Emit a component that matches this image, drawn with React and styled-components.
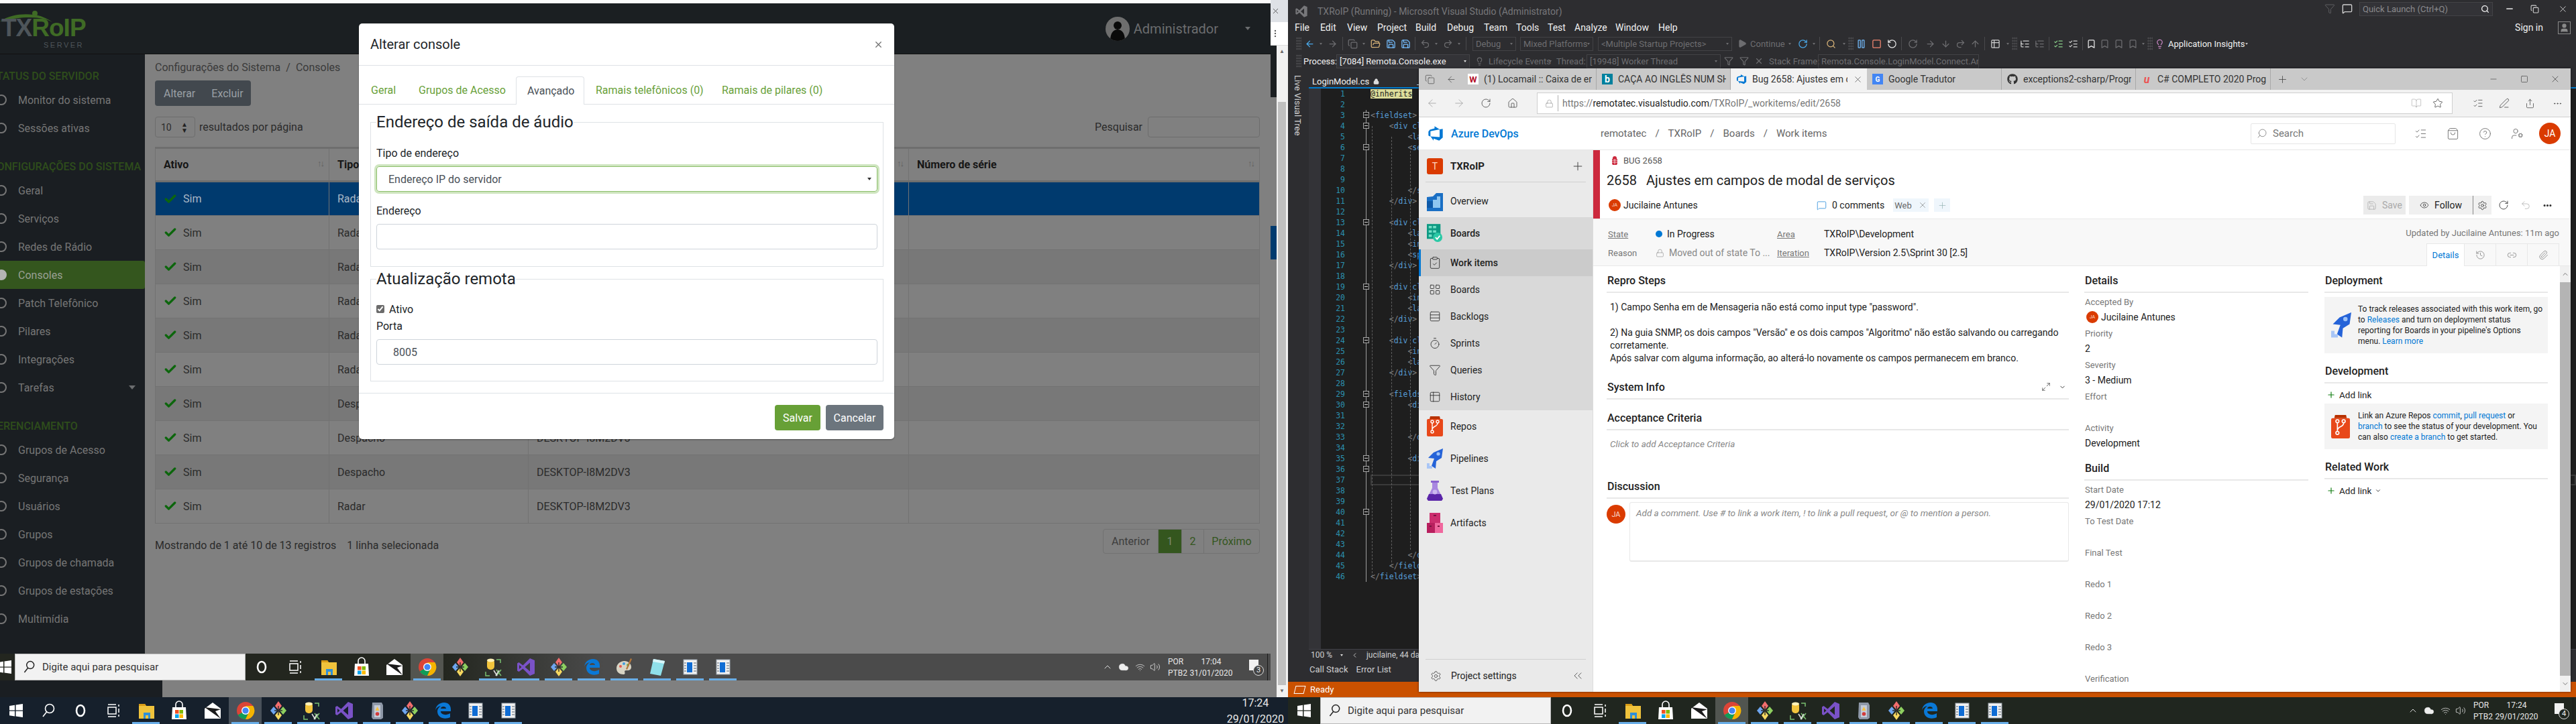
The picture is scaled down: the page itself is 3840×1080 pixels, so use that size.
import React from "react";
import styled, { createGlobalStyle } from "styled-components";
import {
  ArrowDown, ArrowLeft, ArrowRight, ArrowUp, Bookmark, BookOpen, Check, ChevronDown, ChevronLeft, ChevronUp,
  ChevronsLeft, CircleHelp, ClipboardCheck, Cloud, Copy, Ellipsis, EllipsisVertical, Eye, Funnel, History, House, LayoutGrid,
  Lightbulb, Link2, ListChecks, ListTree, Lock, Maximize2, MessageSquare, Minus, Paperclip, Pause, PenLine, Plus,
  Redo2, RotateCcw, RotateCw, Save, Search, Settings, Share, ShoppingBag, Square, Star, Undo2, UserCog, Volume2,
  Wifi, X, FolderOpen, Table2, Timer, Rows3, Play, User,
} from "lucide-react";
import { FaGithub } from "react-icons/fa";

const GlobalStyle = createGlobalStyle`
  html, body {
    margin: 0;
    background: #16202c;
    font-family: Roboto, "Open Sans", sans-serif;
  }
  * { box-sizing: border-box; }
`;

// ---------------------------------------------------------------- taskbar art

const TASK_ICONS = {
  win: <path d="M5 8l8-1.2v7.7H5zM14.5 6.6L25 5v9.5H14.5zM5 15.8h8v7.6L5 22.2zM14.5 15.8H25V25l-10.5-1.5z" fill="#fff" />,
  search: <g fill="none" stroke="#fff" strokeWidth="1.6"><circle cx="17" cy="12" r="6.5" /><path d="M12.5 17L7 24" /></g>,
  cortana: <ellipse cx="15" cy="15" rx="6" ry="8" fill="none" stroke="#fff" strokeWidth="2.6" />,
  task: <g fill="none" stroke="#fff" strokeWidth="1.5"><rect x="7" y="10" width="12" height="10" /><path d="M7 6h12M7 24h12M23 6v3M23 12v6M23 21v3" /></g>,
  explorer: <g><path d="M4 5h9l2 3h12v19H4z" fill="#f0c33c" /><path d="M4 5h9l2 3H4z" fill="#d99c17" /><path d="M11 27v-9h10v9h-3v-5h-4v5z" fill="#2f8fd8" /></g>,
  store: <g><path d="M5 10h20l1 18H4z" fill="#fff" /><path d="M10 10V6a5 5 0 0110 0v4" fill="none" stroke="#fff" strokeWidth="1.6" /><rect x="9" y="14" width="5.5" height="5.5" fill="#f25022" /><rect x="15.5" y="14" width="5.5" height="5.5" fill="#7fba00" /><rect x="9" y="20.5" width="5.5" height="5.5" fill="#00a4ef" /><rect x="15.5" y="20.5" width="5.5" height="5.5" fill="#ffb900" /></g>,
  mail: <g><path d="M3 12L15 3l12 9v15H3z" fill="#fff" /><path d="M3 10l24 3-8 3 8 11z" fill="#1b1b1b" /></g>,
  chrome: <g><circle cx="15" cy="15" r="13" fill="#db4437" /><path d="M15 15L3.7 21.5A13 13 0 0015 28l6-13z" fill="#0f9d58" /><path d="M15 8h11.3A13 13 0 0115 28l6.3-13z" fill="#f4b400" /><circle cx="15" cy="15" r="6" fill="#fff" /><circle cx="15" cy="15" r="4.6" fill="#4285f4" /></g>,
  diamond: <g><path d="M15 1l5 7-5 6-5-6z" fill="#f26d6d" /><path d="M8 9l5 6-5 6-5-6z" fill="#6ea6f0" /><path d="M22 9l5 6-5 6-5-6z" fill="#8ed060" /><path d="M15 16l5 6-5 7-5-7z" fill="#f6d860" /><path d="M15 8v14M9 15h12" stroke="#2e2e2e" strokeWidth="1.4" /></g>,
  db: <g><rect x="6" y="3" width="11" height="16" rx="5" fill="#f2c43d" /><ellipse cx="11.5" cy="5" rx="5.5" ry="2.4" fill="#fff2b8" /><path d="M20 4h6v5M4 22v6h6M20 28l7-9M27 28l-7-9" fill="none" stroke="#7ac070" strokeWidth="1.5" /><path d="M16 20l5 8M24 20l-5 8" stroke="#ddd" strokeWidth="1.6" /></g>,
  vs: <path d="M21 2L10.5 12.5 4.5 8 2 9.5v11L4.5 22l6-4.5L21 28l7-3V5zM21 8.5v13L13.5 15zM5 12l3.5 3L5 18z" fill="#7a52c7" />,
  palette: <g><path d="M15 6C8 6 3 11 3 17c0 6 5 9 10 9 3 0 3-2 2-4 0-2 2-2 4-2 4 0 6-2 6-5 0-5-5-9-10-9z" fill="#d8d4c4" /><circle cx="9" cy="14" r="2" fill="#e85a4f" /><circle cx="14" cy="10" r="2" fill="#3f9be0" /><circle cx="20" cy="12" r="2" fill="#63b455" /><path d="M24 2l-7 16 2 1 7-16z" fill="#b5763a" /></g>,
  note: <g><path d="M9 3l17 3-6 22-16-3z" fill="#8fe0ea" /><path d="M9 3l17 3-1 4-17-3z" fill="#d9f6fa" /></g>,
  secure: <g><path d="M8 3h14l2 4v19l-3 2H9l-2-3z" fill="#8e98a8" /><rect x="11" y="7" width="9" height="18" fill="#c5ccd8" /><path d="M15.5 9l3 6h-6z" fill="#f6c244" /><circle cx="15.5" cy="20" r="2.8" fill="#d23a3a" /></g>,
  doc: <g><rect x="5" y="4" width="20" height="22" fill="#f1f1f1" stroke="#9aa3ad" /><rect x="10" y="8" width="8" height="15" fill="#0f6cd4" /><path d="M6 9h3M6 13h3M6 17h3M6 21h3M20 9h4M20 13h4M20 17h4M20 21h4" stroke="#8a929c" strokeWidth="1.5" /></g>,
  edge: <path d="M4 16C4 8 10 3 17 3c6 0 10 4 10 10v3H12c0 5 8 7 14 3v6c-8 4-19 1-19-9 0-3 2-6 5-8-5 1-8 4-8 8zm8-4h8c0-4-8-4-8 0z" fill="#0a78d6" />,
};

const LEFT_BOTTOM = [
  ["win", 47], ["search", 49], ["cortana", 48], ["task", 49], ["explorer", 49, 1], ["store", 50], ["mail", 49],
  ["chrome", 49, 1, 1], ["diamond", 49, 1], ["db", 49, 1], ["vs", 49, 1], ["secure", 49, 1], ["diamond", 49, 1],
  ["edge", 49, 1], ["doc", 49, 1], ["doc", 49, 1],
];
const INNER_BAR = [
  ["cortana", 48], ["task", 51], ["explorer", 49, 1], ["store", 49], ["mail", 49], ["chrome", 49, 1, 1],
  ["diamond", 49], ["db", 49, 1], ["vs", 49, 1], ["diamond", 49, 1], ["edge", 49, 1], ["palette", 49, 1],
  ["note", 49, 1], ["doc", 49, 1], ["doc", 49, 1],
];
const RIGHT_BAR = [
  ["cortana", 48], ["task", 49], ["explorer", 49, 1], ["store", 50], ["mail", 49], ["chrome", 49, 1, 1],
  ["diamond", 49, 1], ["db", 49, 1], ["vs", 49, 1], ["secure", 49, 1], ["diamond", 49, 1], ["edge", 49, 1],
  ["doc", 49, 1], ["doc", 49, 1],
];

const Bar = styled.div`
  display: flex;
  align-items: stretch;
  height: 40px;
  flex: none;
  background: ${(p) => p.$bg};
  color: #e8e8e8;
`;

const Slot = styled.div`
  position: relative;
  width: ${(p) => p.$w}px;
  flex: none;
  display: flex;
  align-items: center;
  justify-content: center;
  background: ${(p) => (p.$active ? "rgba(255,255,255,.22)" : "transparent")};
  &::after {
    content: "";
    display: ${(p) => (p.$on ? "block" : "none")};
    position: absolute;
    left: 4px;
    right: 4px;
    bottom: 0;
    height: 3px;
    background: #69aee8;
  }
`;

const SearchBox = styled.div`
  width: ${(p) => p.$w}px;
  flex: none;
  background: #f2f2f2;
  border: 1px solid #b8b8b8;
  display: flex;
  align-items: center;
  gap: 9px;
  padding-left: 9px;
  font-size: 15px;
  color: #333;
`;

const Tray = styled.div`
  margin-left: auto;
  display: grid;
  grid-template-columns: 24px 24px 25px 20px 44px 59px 54px 5px;
  align-items: center;
  justify-items: center;
  font-size: 12px;
`;

const LangCol = styled.div`
  display: flex;
  flex-direction: column;
  gap: 3px;
  justify-self: start;
  padding-left: 9px;
`;

const ClockCol = styled.div`
  display: flex;
  flex-direction: column;
  align-items: center;
  gap: 3px;
  white-space: nowrap;
  text-align: center;
`;

const LoneClock = styled(ClockCol)`
  margin-left: auto;
  margin-right: 6px;
  justify-content: center;
  gap: 5px;
`;

const Notif = styled.div`
  position: relative;
  width: 14px;
  height: 16px;
  background: #f1f1f1;
  margin-top: -6px;
  margin-left: 14px;
`;

const NotifCount = styled.span`
  position: absolute;
  left: 6px;
  top: 8px;
  width: 16px;
  height: 16px;
  border: 1px solid #ddd;
  border-radius: 50%;
  background: ${(p) => p.$bg};
  color: #f1f1f1;
  font-size: 11px;
  line-height: 14px;
  text-align: center;
`;

const TrayEnd = styled.div`
  width: 1px;
  height: 40px;
  background: #1c1c1c;
  justify-self: start;
`;

function Slots({ items }) {
  return items.map(([name, w, on, active], i) => (
    <Slot key={i} $w={w} $on={on} $active={active}>
      <svg width="30" height="30" viewBox="0 0 30 30">{TASK_ICONS[name]}</svg>
    </Slot>
  ));
}

function SystemTray({ time, date, count, bg }) {
  return (
    <Tray>
      <ChevronUp size={16} strokeWidth={1.4} />
      <Cloud size={16} fill="#eee" strokeWidth={1} />
      <Wifi size={15} strokeWidth={1.2} />
      <Volume2 size={16} strokeWidth={1.2} />
      <LangCol><span>POR</span><span>PTB2</span></LangCol>
      <ClockCol><span>{time}</span><span>{date}</span></ClockCol>
      <Notif><NotifCount $bg={bg}>{count}</NotifCount></Notif>
      <TrayEnd />
    </Tray>
  );
}

const WinSearch = () => (
  <svg width="22" height="22" viewBox="0 0 30 30"><g fill="none" stroke="#222" strokeWidth="2"><circle cx="18" cy="11" r="7.5" /><path d="M13 17l-7 9" /></g></svg>
);

// ---------------------------------------------------------------- left screen

const Desktop = styled.div`
  display: flex;
  width: 3840px;
  height: 1080px;
  overflow: hidden;
`;

const LeftScreen = styled.div`
  position: relative;
  width: 1920px;
  flex: none;
  display: flex;
  flex-direction: column;
`;

const LeftTop = styled.div`
  display: flex;
  height: 1040px;
`;

const PageColumn = styled.div`
  width: 1894px;
  flex: none;
  display: flex;
  flex-direction: column;
`;

const TopStrip = styled.div`
  height: 5px;
  flex: none;
  background: #fbfbfb;
`;

const AppNav = styled.div`
  height: 76px;
  flex: none;
  display: flex;
  align-items: center;
  background: #1b1f22;
  border-bottom: 1px solid #111;
`;

const Logo = styled.div`
  position: relative;
  width: 120px;
  height: 60px;
  font-family: "Liberation Sans", sans-serif;
`;

const LogoArc = styled.svg`
  position: absolute;
  left: 0;
  top: 2px;
`;

const LogoWord = styled.div`
  position: absolute;
  left: 2px;
  top: 8px;
  font-size: 37px;
  font-weight: 700;
  letter-spacing: -1px;
  color: #3f6b25;
  white-space: nowrap;
`;

const LogoTx = styled.span`
  color: #4e555a;
`;

const LogoSub = styled.div`
  position: absolute;
  left: 65px;
  top: 48px;
  font-size: 11px;
  letter-spacing: 2.5px;
  color: #4e555a;
`;

const UserMenu = styled.div`
  margin-left: auto;
  margin-right: 30px;
  display: flex;
  align-items: center;
  gap: 6px;
  font-size: 20px;
  color: #6b6d6f;
`;

const UserPic = styled.div`
  width: 36px;
  height: 36px;
  border-radius: 50%;
  background: #6e6e6e;
  display: flex;
  align-items: flex-end;
  justify-content: center;
  overflow: hidden;
`;

const Caret = styled.span`
  width: 0;
  height: 0;
  border-left: ${(p) => p.$s || 5}px solid transparent;
  border-right: ${(p) => p.$s || 5}px solid transparent;
  border-top: ${(p) => (p.$s || 5) + 1}px solid ${(p) => p.$c || "#6b6d6f"};
  margin-left: ${(p) => p.$ml || 0}px;
`;

const AppBody = styled.div`
  flex: 1;
  display: flex;
  min-height: 0;
`;

const SideNav = styled.div`
  width: 216px;
  flex: none;
  background: #1a1e22;
  overflow: hidden;
  padding-top: 12px;
`;

const SideHeader = styled.div`
  height: ${(p) => (p.$first ? 35 : 51)}px;
  display: flex;
  align-items: flex-end;
  padding-bottom: 5px;
  margin-left: -15px;
  font-size: 16px;
  font-weight: 500;
  white-space: nowrap;
  color: #2e4d1b;
`;

const SideItem = styled.div`
  height: 42px;
  display: flex;
  align-items: center;
  gap: 17px;
  margin-left: -6px;
  padding-right: 16px;
  border-radius: 0 3px 3px 0;
  font-size: 16px;
  color: ${(p) => (p.$active ? "#9aa094" : "#767676")};
  background: ${(p) => (p.$active ? "#34561e" : "transparent")};
`;

const SideDot = styled.span`
  width: 16px;
  height: 16px;
  flex: none;
  border-radius: 50%;
  border: 2px solid ${(p) => (p.$active ? "#b4b4b4" : "#767676")};
  background: ${(p) => (p.$active ? "#b4b4b4" : "transparent")};
`;

const SideCaret = styled(Caret)`
  margin-left: auto;
  margin-right: -2px;
`;

const Content = styled.div`
  flex: 1;
  min-width: 0;
  background: #808080;
  padding: 0 16px 0 15px;
  color: #2b2b2b;
  font-size: 16px;
`;

const Crumb = styled.div`
  height: 39px;
  display: flex;
  align-items: center;
  gap: 8px;
  color: #3a3a3a;
`;

const ActionGroup = styled.div`
  width: 143px;
  height: 38px;
  display: flex;
  align-items: center;
  gap: 24px;
  padding-left: 13px;
  background: #42484e;
  border-radius: 4px;
  color: #9aa0a5;
`;

const Controls = styled.div`
  margin-top: 16px;
  height: 31px;
  display: flex;
  align-items: center;
`;

const PageSize = styled.div`
  width: 60px;
  height: 31px;
  display: flex;
  align-items: center;
  justify-content: space-between;
  padding: 0 10px 0 8px;
  margin-right: 6px;
  border: 1px solid #6d6d6d;
  border-radius: 4px;
  font-size: 14px;
`;

const SortCaret = styled.span`
  font-size: 10px;
  line-height: 9px;
  color: #222;
  text-align: center;
`;

const SearchLabel = styled.span`
  margin-left: auto;
  margin-right: 8px;
`;

const SearchField = styled.div`
  width: 167px;
  height: 31px;
  border: 1px solid #6d6d6d;
  border-radius: 4px;
`;

const Table = styled.table`
  margin-top: 14px;
  width: 1646px;
  table-layout: fixed;
  border-collapse: collapse;
  border: 1px solid #727272;
  border-top: 3px solid #6e6e6e;
`;

const HeadCell = styled.th`
  position: relative;
  width: ${(p) => p.$w}px;
  height: 50px;
  padding: 0 12px;
  text-align: left;
  font-size: 16px;
  font-weight: 700;
  color: #161616;
  border: 1px solid #727272;
  border-bottom: 3px solid #6e6e6e;
`;

const SortArrows = styled.span`
  position: absolute;
  right: 8px;
  top: 14px;
  font-size: 13px;
  font-weight: 400;
  letter-spacing: -2px;
  color: #5e5e5e;
`;

const Row = styled.tr`
  height: 51px;
  background: ${(p) => (p.$sel ? "#003a6e" : p.$odd ? "#787878" : "#808080")};
  color: ${(p) => (p.$sel ? "#aab8c6" : "#2b2b2b")};
`;

const Cell = styled.td`
  padding: 0 12px;
  border: 1px solid #727272;
`;

const CheckRow = styled.span`
  display: flex;
  align-items: center;
  gap: 9px;
`;

const FootRow = styled.div`
  margin-top: 8px;
  display: flex;
  align-items: flex-start;
`;

const Info = styled.div`
  padding-top: 15px;
  display: flex;
  gap: 16px;
`;

const Pager = styled.div`
  margin-left: auto;
  display: flex;
  height: 37px;
  border: 1px solid #727272;
  border-radius: 4px;
`;

const PagerCell = styled.div`
  width: ${(p) => p.$w}px;
  display: flex;
  align-items: center;
  justify-content: center;
  background: ${(p) => (p.$active ? "#34561e" : "transparent")};
  color: ${(p) => (p.$active ? "#7d8a72" : p.$dim ? "#3d3d3d" : "#34561e")};
  border-left: ${(p) => (p.$first ? "none" : "1px solid #727272")};
`;

const GapRow = styled.div`
  height: 25px;
  flex: none;
  background: #808080;
`;

const GapDark = styled.div`
  width: 242px;
  height: 100%;
  background: #1a1e22;
`;

// behind-window sliver on the right of the left screen
const PeekColumn = styled.div`
  width: 26px;
  flex: none;
  display: flex;
  flex-direction: column;
`;

const PeekTab = styled.div`
  height: 33px;
  padding-left: 1px;
  display: flex;
  align-items: center;
  background: #dee1e6;
  color: #444;
`;

const PeekBar = styled.div`
  height: 35px;
  flex: none;
  display: flex;
  align-items: center;
  background: #fff;
  border-bottom: 1px solid #ddd;
  color: #555;
`;

const PeekBody = styled.div`
  flex: 1;
  display: flex;
`;

const PeekPage = styled.div`
  width: 9px;
  background: linear-gradient(#1b1f22 0 77px, #808080 77px 269px, #003a6e 269px 319px, #808080 319px);
`;

const PeekScroll = styled.div`
  flex: 1;
  background: #c0c0c0;
  border-left: 2px solid #f1f1f1;
  border-right: 3px solid #f1f1f1;
  display: flex;
  flex-direction: column;
  align-items: center;
  justify-content: space-between;
  color: #666;
  font-size: 8px;
`;

const ScrollTop = styled.div`
  width: 100%;
  height: 84px;
  background: #f1f1f1;
  text-align: center;
  padding-top: 4px;
`;

const ScrollEnd = styled.div`
  width: 100%;
  height: 18px;
  background: #f1f1f1;
  text-align: center;
  padding-top: 4px;
`;

// ---------------------------------------------------------------- modal

const Modal = styled.div`
  position: absolute;
  left: 535px;
  top: 35px;
  width: 798px;
  height: 620px;
  background: #fff;
  border-radius: 5px;
  color: #212529;
  font-size: 16px;
  box-shadow: 0 1px 2px rgba(0, 0, 0, .4);
`;

const ModalHead = styled.div`
  height: 63px;
  display: flex;
  align-items: center;
  justify-content: space-between;
  padding: 0 16px 0 17px;
  border-bottom: 1px solid #dee2e6;
  font-size: 20px;
  color: #212529;
`;

const CloseX = styled.span`
  color: #6f6f6f;
  display: flex;
`;

const TabRow = styled.div`
  margin-top: 16px;
  height: 42px;
  display: flex;
  border-bottom: 1px solid #dee2e6;
`;

const ModalTab = styled.div`
  width: ${(p) => p.$w}px;
  height: ${(p) => (p.$active ? 42 : 41)}px;
  padding-left: ${(p) => p.$pl}px;
  display: flex;
  align-items: center;
  white-space: nowrap;
  color: ${(p) => (p.$active ? "#495057" : "#69a13a")};
  background: #fff;
  border: ${(p) => (p.$active ? "1px solid #dee2e6" : "none")};
  border-bottom: none;
  border-radius: 4px 4px 0 0;
`;

const ModalBody = styled.div`
  padding: 0 16px 0 17px;
`;

const Group = styled.fieldset`
  margin: ${(p) => p.$mt}px 0 0;
  padding: 0 8px ${(p) => p.$pb}px;
  border: 1px solid #dee2e6;
  min-width: 0;
`;

const GroupTitle = styled.legend`
  padding: 0;
  font-size: 24px;
  line-height: 29px;
  color: #212529;
`;

const FieldLabel = styled.div`
  height: 20px;
  line-height: 20px;
  margin-top: ${(p) => p.$mt}px;
`;

const BoxInput = styled.input`
  display: block;
  width: 100%;
  height: 38px;
  margin-top: 9px;
  padding: 0 24px;
  border: 1px solid #ced4da;
  border-radius: 4px;
  font: inherit;
  color: #495057;
  outline: none;
`;

const Picker = styled.div`
  height: 38px;
  margin-top: 9px;
  display: flex;
  align-items: center;
  justify-content: space-between;
  padding: 0 8px 0 17px;
  border: 1px solid #8dc06b;
  border-radius: 4px;
  box-shadow: 0 0 0 3px #cfe5c0;
  color: #495057;
`;

const CheckLine = styled.label`
  height: 20px;
  margin-top: 20px;
  display: flex;
  align-items: center;
  gap: 7px;
`;

const TickBox = styled.input`
  width: 12px;
  height: 12px;
  margin: 0;
  accent-color: #6b6b6b;
`;

const ModalFoot = styled.div`
  margin-top: 17px;
  padding: 17px 16px 0 0;
  display: flex;
  justify-content: flex-end;
  gap: 8px;
  border-top: 1px solid #dee2e6;
`;

const ModalButton = styled.div`
  width: ${(p) => p.$w}px;
  height: 38px;
  display: flex;
  align-items: center;
  justify-content: center;
  border-radius: 4px;
  color: #fff;
  background: ${(p) => p.$bg};
`;

const CONSOLE_ROWS = [
  ["Radar"], ["Radar"], ["Radar"], ["Radar"], ["Radar"], ["Radar"], ["Despacho"],
  ["Despacho", "DESKTOP-I8M2DV3"], ["Despacho", "DESKTOP-I8M2DV3"], ["Radar", "DESKTOP-I8M2DV3"],
];
const SIDE_A = ["Monitor do sistema", "Sessões ativas"];
const SIDE_B = ["Geral", "Serviços", "Redes de Rádio", "Consoles", "Patch Telefônico", "Pilares", "Integrações", "Tarefas"];
const SIDE_C = ["Grupos de Acesso", "Segurança", "Usuários", "Grupos", "Grupos de chamada", "Grupos de estações", "Multimídia"];

function SideEntries({ items }) {
  return items.map((t) => (
    <SideItem key={t} $active={t === "Consoles"}>
      <SideDot $active={t === "Consoles"} />
      {t}
      {t === "Tarefas" && <SideCaret $s={5} />}
    </SideItem>
  ));
}

function ConsoleModal() {
  return (
    <Modal>
      <ModalHead>
        Alterar console
        <CloseX><X size={15} strokeWidth={2} /></CloseX>
      </ModalHead>
      <TabRow>
        <ModalTab $w={71} $pl={18}>Geral</ModalTab>
        <ModalTab $w={163} $pl={18}>Grupos de Acesso</ModalTab>
        <ModalTab $w={102} $pl={16} $active>Avançado</ModalTab>
        <ModalTab $w={187} $pl={17}>Ramais telefônicos (0)</ModalTab>
        <ModalTab $w={200} $pl={18}>Ramais de pilares (0)</ModalTab>
      </TabRow>
      <ModalBody>
        <Group $mt={12} $pb={25}>
          <GroupTitle>Endereço de saída de áudio</GroupTitle>
          <FieldLabel $mt={22}>Tipo de endereço</FieldLabel>
          <Picker>Endereço IP do servidor<Caret $s={3} $c="#333" /></Picker>
          <FieldLabel $mt={19}>Endereço</FieldLabel>
          <BoxInput readOnly value="" />
        </Group>
        <Group $mt={4} $pb={24}>
          <GroupTitle>Atualização remota</GroupTitle>
          <CheckLine><TickBox type="checkbox" checked readOnly />Ativo</CheckLine>
          <FieldLabel $mt={6}>Porta</FieldLabel>
          <BoxInput readOnly value="8005" />
        </Group>
      </ModalBody>
      <ModalFoot>
        <ModalButton $w={68} $bg="#67a036">Salvar</ModalButton>
        <ModalButton $w={86} $bg="#6c757d">Cancelar</ModalButton>
      </ModalFoot>
    </Modal>
  );
}

function LeftMonitor() {
  return (
    <LeftScreen>
      <LeftTop>
        <PageColumn>
          <TopStrip />
          <AppNav>
            <Logo>
              <LogoArc width="90" height="20" viewBox="0 0 90 20">
                <path d="M0 17C14 7 34 5 50 7c10 1 20 5 28 11C66 11 40 7 0 17z" fill="#3f6b25" />
                <circle cx="52" cy="5" r="4" fill="#3f6b25" />
              </LogoArc>
              <LogoWord><LogoTx>TX</LogoTx>RoIP</LogoWord>
              <LogoSub>SERVER</LogoSub>
            </Logo>
            <UserMenu>
              <UserPic>
                <svg width="26" height="32" viewBox="0 0 26 32"><circle cx="13" cy="9" r="6" fill="#0a0a0a" /><path d="M2 32c0-12 5-17 11-17s11 5 11 17z" fill="#0a0a0a" /></svg>
              </UserPic>
              Administrador
              <Caret $s={4} $ml={34} />
            </UserMenu>
          </AppNav>
          <AppBody>
            <SideNav>
              <SideHeader $first>STATUS DO SERVIDOR</SideHeader>
              <SideEntries items={SIDE_A} />
              <SideHeader>CONFIGURAÇÕES DO SISTEMA</SideHeader>
              <SideEntries items={SIDE_B} />
              <SideHeader>GERENCIAMENTO</SideHeader>
              <SideEntries items={SIDE_C} />
            </SideNav>
            <Content>
              <Crumb>Configurações do Sistema<span>/</span>Consoles</Crumb>
              <ActionGroup><span>Alterar</span><span>Excluir</span></ActionGroup>
              <Controls>
                <PageSize>10<SortCaret>▲<br />▼</SortCaret></PageSize>
                resultados por página
                <SearchLabel>Pesquisar</SearchLabel>
                <SearchField />
              </Controls>
              <Table>
                <thead>
                  <tr>
                    <HeadCell $w={259}>Ativo<SortArrows>↑↓</SortArrows></HeadCell>
                    <HeadCell $w={297}>Tipo<SortArrows>↑↓</SortArrows></HeadCell>
                    <HeadCell $w={567}><SortArrows>↑↓</SortArrows></HeadCell>
                    <HeadCell $w={523}>Número de série<SortArrows>↑↓</SortArrows></HeadCell>
                  </tr>
                </thead>
                <tbody>
                  {CONSOLE_ROWS.map(([tipo, host], i) => (
                    <Row key={i} $sel={i === 0} $odd={i % 2 === 0}>
                      <Cell><CheckRow><Check size={20} strokeWidth={4} color="#0c660c" />Sim</CheckRow></Cell>
                      <Cell>{tipo}</Cell>
                      <Cell>{host}</Cell>
                      <Cell />
                    </Row>
                  ))}
                </tbody>
              </Table>
              <FootRow>
                <Info><span>Mostrando de 1 até 10 de 13 registros</span><span>1 linha selecionada</span></Info>
                <Pager>
                  <PagerCell $w={81} $first $dim>Anterior</PagerCell>
                  <PagerCell $w={35} $active>1</PagerCell>
                  <PagerCell $w={33}>2</PagerCell>
                  <PagerCell $w={83}>Próximo</PagerCell>
                </Pager>
              </FootRow>
            </Content>
          </AppBody>
          <Bar $bg="linear-gradient(90deg, #23261f 0 660px, #4b4b4b 900px)">
            <Slot $w={22}><svg width="22" height="30" viewBox="8 0 22 30">{TASK_ICONS.win}</svg></Slot>
            <SearchBox $w={344}><WinSearch />Digite aqui para pesquisar</SearchBox>
            <Slots items={INNER_BAR} />
            <SystemTray time="17:04" date="31/01/2020" count="3" bg="#444" />
          </Bar>
          <GapRow><GapDark /></GapRow>
        </PageColumn>
        <PeekColumn>
          <PeekTab><X size={13} strokeWidth={1.5} /></PeekTab>
          <PeekBar><EllipsisVertical size={14} /></PeekBar>
          <PeekBody>
            <PeekPage />
            <PeekScroll><ScrollTop>▲</ScrollTop><ScrollEnd>▼</ScrollEnd></PeekScroll>
          </PeekBody>
        </PeekColumn>
      </LeftTop>
      <Bar $bg="#16202c">
        <Slots items={LEFT_BOTTOM} />
        <LoneClock><span>17:24</span><span>29/01/2020</span></LoneClock>
      </Bar>
      <ConsoleModal />
    </LeftScreen>
  );
}

// ---------------------------------------------------------------- visual studio

const RightScreen = styled.div`
  position: relative;
  width: 1920px;
  flex: none;
  display: flex;
  flex-direction: column;
`;

const StudioWindow = styled.div`
  height: 1040px;
  display: flex;
  flex-direction: column;
  background: #2d2d30;
  color: #f1f1f1;
  font-size: 13px;
`;

const StudioTitle = styled.div`
  height: 30px;
  flex: none;
  display: flex;
  align-items: center;
  padding: 4px 0 0 10px;
  color: #77777a;
  font-size: 14px;
`;

const TitleText = styled.span`
  margin-left: 14px;
`;

const TitleRight = styled.div`
  margin-left: auto;
  display: flex;
  align-items: center;
  gap: 10px;
  margin-top: -8px;
  padding-right: 8px;
  color: #d0d0d0;
`;

const QuickLaunch = styled.div`
  width: 199px;
  height: 21px;
  display: flex;
  align-items: center;
  justify-content: space-between;
  padding: 0 4px;
  margin-right: 8px;
  border: 1px solid #434346;
  background: #333337;
  color: #8a8a8d;
  font-size: 13px;
`;

const MenuRow = styled.div`
  height: 22px;
  flex: none;
  display: flex;
  align-items: center;
  padding-left: 10px;
  font-size: 14px;
`;

const MenuLabel = styled.span`
  width: ${(p) => p.$w}px;
  flex: none;
`;

const SignIn = styled.div`
  margin-left: auto;
  display: flex;
  align-items: center;
  gap: 22px;
  padding-right: 8px;
`;

const UserBox = styled.div`
  width: 19px;
  height: 19px;
  border: 1px solid #8a8a8a;
  display: flex;
  align-items: center;
  justify-content: center;
  color: #8a8a8a;
`;

const ToolStrip = styled.div`
  height: 26px;
  flex: none;
  display: flex;
  align-items: center;
  padding-left: 12px;
  color: #6d6d70;
  white-space: nowrap;
`;

const Tool = styled.span`
  width: ${(p) => p.$w}px;
  flex: none;
  display: flex;
  align-items: center;
  justify-content: center;
  margin-left: ${(p) => p.$ml || 0}px;
`;

const ToolText = styled.span`
  width: ${(p) => p.$w}px;
  flex: none;
  color: ${(p) => (p.$on ? "#f1f1f1" : "#6d6d70")};
  margin-left: ${(p) => p.$ml || 0}px;
`;

const Grip = styled.span`
  width: 8px;
  height: 20px;
  flex: none;
  background: radial-gradient(#4a4a4d 1px, transparent 1.2px) 0 0 / 3px 4px;
`;

const ToolSep = styled.span`
  width: ${(p) => p.$w || 6}px;
  height: 20px;
  flex: none;
  background: linear-gradient(#4a4a4d, #4a4a4d) center / 1px 100% no-repeat;
`;

const Combo = styled.div`
  width: ${(p) => p.$w}px;
  height: 21px;
  flex: none;
  margin-left: ${(p) => p.$ml || 0}px;
  display: flex;
  align-items: center;
  justify-content: space-between;
  padding: 0 4px;
  overflow: hidden;
  border: 1px solid #434346;
  background: ${(p) => (p.$on ? "#333337" : "transparent")};
  color: ${(p) => (p.$on ? "#f1f1f1" : "#6d6d70")};
`;

const MiniCaret = styled(Caret).attrs((p) => ({ $s: 2, $c: p.$c || "#6d6d70" }))``;

const DocArea = styled.div`
  flex: 1;
  min-height: 0;
  display: flex;
`;

const Rail = styled.div`
  width: 31px;
  flex: none;
  padding: 8px 0 0 7px;
`;

const RailText = styled.div`
  writing-mode: vertical-rl;
  font-size: 13px;
  color: #d0d0d0;
`;

const EditorColumn = styled.div`
  flex: 1;
  min-width: 0;
  display: flex;
  flex-direction: column;
`;

const DocTabs = styled.div`
  height: 28px;
  flex: none;
  display: flex;
  align-items: center;
  gap: 6px;
  padding: 8px 0 0 5px;
  border-bottom: 2px solid #007acc;
`;

const DocTabExtra = styled.span`
  margin-left: 50px;
`;

const CodePane = styled.div`
  position: relative;
  flex: 1;
  min-height: 0;
  overflow: hidden;
  background: #1e1e1e;
  border-left: 18px solid #333337;
  font-family: "DejaVu Sans Mono", monospace;
  font-size: 11.5px;
`;

const CodeLine = styled.div`
  display: grid;
  grid-template-columns: 36px 25px 13px 1fr;
  height: 16px;
  line-height: 16px;
  white-space: pre;
`;

const LineNo = styled.span`
  text-align: right;
  color: #2b91af;
`;

const FoldCell = styled.span`
  grid-column: 3;
  position: relative;
  border-left: ${(p) => (p.$rail ? "1px solid #a0a0a0" : "none")};
  margin-left: 6px;
`;

const FoldBox = styled.span`
  position: absolute;
  left: -5px;
  top: 3px;
  width: 9px;
  height: 9px;
  background: #1e1e1e;
  border: 1px solid #a5a5a5;
  &::after {
    content: "";
    position: absolute;
    left: 1px;
    top: 3px;
    width: 5px;
    height: 1px;
    background: #d0d0d0;
  }
`;

const CodeText = styled.span`
  grid-column: 4;
  color: #808080;
  outline: ${(p) => (p.$current ? "2px solid #3a3a3a" : "none")};
  outline-offset: -2px;
`;

const TagName = styled.span`
  color: #569cd6;
`;

const Directive = styled.span`
  background: #dcdc9a;
  color: #1e1e1e;
`;

const Guide = styled.span`
  position: absolute;
  left: ${(p) => p.$x}px;
  top: ${(p) => p.$top}px;
  height: ${(p) => p.$h}px;
  border-left: 1px dashed #5f5f5f;
`;

const ZoomBar = styled.div`
  height: 17px;
  flex: none;
  display: flex;
  align-items: center;
  gap: 12px;
  padding-left: 3px;
  background: #2d2d30;
  border-top: 1px solid #3f3f46;
  font-size: 12px;
  color: #d0d0d0;
`;

const PanelTabs = styled.div`
  height: 32px;
  flex: none;
  display: flex;
  gap: 12px;
  padding: 6px 0 0 1px;
  color: #d0d0d0;
`;

const StatusBar = styled.div`
  height: 23px;
  flex: none;
  display: flex;
  align-items: center;
  gap: 8px;
  padding-left: 10px;
  background: #ca5100;
  color: #fff;
`;

const SourceBox = styled.span`
  width: 15px;
  height: 12px;
  border: 1.5px solid #fff;
  transform: skewX(-14deg);
`;

const CODE = {
  3: "<fieldset>", 4: '    <div class="form-group">', 5: "        <label>", 6: "        <select>", 10: "        </select>",
  11: "    </div>", 13: '    <div class="form-group">', 14: "        <label>", 15: "        <input>", 16: "        <span>",
  17: "    </div>", 19: '    <div class="form-group">', 20: "        <input>", 21: "        <label>", 22: "    </div>",
  24: '    <div class="form-group">', 25: "        <input>", 26: "        <label>", 27: "    </div>", 29: "    <fieldset>",
  30: '        <div class="form-group">', 33: "        </div>", 35: '        <div class="form-group">', 44: "        </div>",
  45: "    </fieldset>", 46: "</fieldset>",
};
const FOLDS = [3, 4, 6, 13, 19, 24, 29, 30, 35, 36, 40];

function CodeTokens({ text }) {
  return text.split(/(<\/?|>|\s+class="[^"]*")/).map((part, i) =>
    part === "<" || part === "</" || part === ">" || part === "" ? part : <TagName key={i}>{part}</TagName>
  );
}

function CodeView() {
  const lines = Array.from({ length: 46 }, (_, i) => i + 1);
  return (
    <CodePane>
      {lines.map((n) => (
        <CodeLine key={n}>
          <LineNo>{n}</LineNo>
          <FoldCell $rail={n >= 3}>{FOLDS.includes(n) && <FoldBox />}</FoldCell>
          <CodeText $current={n === 37}>
            {n === 1 ? <Directive>@inherits</Directive> : <CodeTokens text={CODE[n] || ""} />}
          </CodeText>
        </CodeLine>
      ))}
      <Guide $x={76} $top={56} $h={672} />
      <Guide $x={105} $top={72} $h={640} />
      <Guide $x={133} $top={88} $h={600} />
    </CodePane>
  );
}

const A = "#6d6d70";
const TOOLS_A = [
  [ArrowLeft, 24, "#4aa8e8"], [null, 10], [ArrowRight, 24, A], ["sep"], [Copy, 24, A], [null, 10], [FolderOpen, 24, "#dcb67a"],
  [Save, 22, "#75beff"], [Save, 22, "#75beff"], ["sep"], [Undo2, 24, A], [null, 10], [Redo2, 24, A], [null, 10],
];
const TOOLS_B = [
  [RotateCw, 24, "#4aa8e8"], [null, 10], ["sep"], [Search, 28, "#dcb67a"], [null, 12], ["grip"], [Pause, 22, "#75beff"],
  [Square, 24, "#f48771"], [RotateCcw, 22, "#e8e8e8"], ["sep"], [RotateCw, 28, A], [ArrowRight, 24, A], [ArrowDown, 22, A],
  [Redo2, 22, A], [ArrowUp, 22, A], ["sep"], [Table2, 26, "#d0d0d0"], [null, 12], ["grip"], [ListTree, 22, "#d0d0d0"],
  [ListTree, 22, A], ["sep"], [ListChecks, 22, "#8ad08a"], [ListChecks, 22, "#d0d0d0"], ["sep"], [Bookmark, 20, "#e8e8e8"],
  [Bookmark, 21, A], [Bookmark, 21, A], [Bookmark, 20, A], [null, 12], ["grip"], [Lightbulb, 20, "#c586c0"],
];

function ToolRun({ tools }) {
  return tools.map(([Icon, w, color], i) => {
    if (Icon === "sep") return <ToolSep key={i} />;
    if (Icon === "grip") return <Grip key={i} />;
    if (!Icon) return <Tool key={i} $w={w}><MiniCaret /></Tool>;
    return <Tool key={i} $w={w}><Icon size={15} color={color} strokeWidth={2} /></Tool>;
  });
}

const MENU = [
  ["File", 38], ["Edit", 40], ["View", 45], ["Project", 57], ["Build", 47], ["Debug", 55], ["Team", 48], ["Tools", 47],
  ["Test", 40], ["Analyze", 61], ["Window", 64], ["Help", 40],
];

function VisualStudio() {
  return (
    <StudioWindow>
      <StudioTitle>
        <svg width="20" height="20" viewBox="0 0 30 30">{React.cloneElement(TASK_ICONS.vs, { fill: "#77777a" })}</svg>
        <TitleText>TXRoIP (Running) - Microsoft Visual Studio  (Administrator)</TitleText>
        <TitleRight>
          <Funnel size={16} strokeWidth={1} color="#77777a" />
          <MessageSquare size={16} color="#d0d0d0" />
          <QuickLaunch>Quick Launch (Ctrl+Q)<Search size={13} color="#f1f1f1" strokeWidth={2.4} /></QuickLaunch>
          <Minus size={14} strokeWidth={3} />
          <Tool $w={24} $ml={8}><Copy size={13} strokeWidth={2} /></Tool>
          <Tool $w={24} $ml={8}><X size={15} strokeWidth={1.5} /></Tool>
        </TitleRight>
      </StudioTitle>
      <MenuRow>
        {MENU.map(([t, w]) => <MenuLabel key={t} $w={w}>{t}</MenuLabel>)}
        <SignIn>Sign in<UserBox><User size={15} fill="#8a8a8a" /></UserBox></SignIn>
      </MenuRow>
      <ToolStrip>
        <Grip />
        <ToolRun tools={TOOLS_A} />
        <ToolSep $w={10} />
        <Combo $w={65} $ml={5}>Debug<MiniCaret /></Combo>
        <Combo $w={109} $ml={6}>Mixed Platforms<MiniCaret /></Combo>
        <Combo $w={200} $ml={7}>&lt;Multiple Startup Projects&gt;<MiniCaret /></Combo>
        <Tool $w={24} $ml={3}><Play size={14} color={A} fill={A} /></Tool>
        <ToolText $w={52}>Continue</ToolText>
        <Tool $w={14}><MiniCaret /></Tool>
        <ToolRun tools={TOOLS_B} />
        <ToolText $w={112} $ml={3} $on>Application Insights</ToolText>
        <Tool $w={10}><MiniCaret $c="#bbb" /></Tool>
      </ToolStrip>
      <ToolStrip>
        <Grip />
        <ToolText $w={49} $ml={3} $on>Process:</ToolText>
        <Combo $w={199} $on>[7084] Remota.Console.exe<MiniCaret $c="#ddd" /></Combo>
        <Tool $w={28}><Lightbulb size={13} color={A} /></Tool>
        <ToolText $w={83}>Lifecycle Events</ToolText>
        <Tool $w={18}><MiniCaret /></Tool>
        <ToolText $w={45}>Thread:</ToolText>
        <Combo $w={200}>[19948] Worker Thread<MiniCaret /></Combo>
        <Tool $w={24}><Funnel size={14} color={A} /></Tool>
        <Tool $w={22}><Funnel size={14} color={A} /></Tool>
        <Tool $w={22}><X size={14} color={A} /></Tool>
        <ToolText $w={73} $ml={4}>Stack Frame:</ToolText>
        <Combo $w={240}>Remota.Console.LoginModel.Connect.An<MiniCaret /></Combo>
      </ToolStrip>
      <DocArea>
        <Rail><RailText>Live Visual Tree</RailText></Rail>
        <EditorColumn>
          <DocTabs>
            LoginModel.cs
            <Lock size={9} fill="#ddd" />
            <DocTabExtra>_modal</DocTabExtra>
          </DocTabs>
          <CodeView />
          <ZoomBar>100 %<MiniCaret $c="#ddd" /><ChevronLeft size={11} />jucilaine, 44 days ago</ZoomBar>
          <PanelTabs><span>Call Stack</span><span>Error List</span></PanelTabs>
        </EditorColumn>
      </DocArea>
      <StatusBar><SourceBox />Ready</StatusBar>
    </StudioWindow>
  );
}

// ---------------------------------------------------------------- edge + azure boards

const EdgeWindow = styled.div`
  position: absolute;
  left: 195px;
  top: 102px;
  width: 1717px;
  height: 930px;
  display: flex;
  flex-direction: column;
  background: #fff;
  color: #222;
  font-size: 14px;
  box-shadow: 0 0 3px rgba(0, 0, 0, .6);
`;

const EdgeTabs = styled.div`
  height: 32px;
  flex: none;
  display: flex;
  align-items: center;
  background: #c9c9c9;
  color: #333;
`;

const EdgeTab = styled.div`
  width: ${(p) => p.$w}px;
  height: 100%;
  flex: none;
  display: flex;
  align-items: center;
  gap: 8px;
  padding: 0 6px 0 8px;
  overflow: hidden;
  white-space: nowrap;
  background: ${(p) => (p.$active ? "#f2f2f2" : "transparent")};
  border-right: ${(p) => (p.$active ? "none" : "1px solid #a9a9a9")};
`;

const TabCaption = styled.span`
  flex: 1;
  min-width: 0;
  overflow: hidden;
`;

const Favicon = styled.span`
  width: 16px;
  height: 16px;
  flex: none;
  display: flex;
  align-items: center;
  justify-content: center;
  font-size: ${(p) => p.$fs || 13}px;
  font-weight: 700;
  font-style: ${(p) => (p.$it ? "italic" : "normal")};
  background: ${(p) => p.$bg || "transparent"};
  color: ${(p) => p.$c || "#333"};
`;

const WinButton = styled.span`
  width: ${(p) => p.$w}px;
  flex: none;
  display: flex;
  justify-content: center;
  color: #333;
`;

const EdgeBar = styled.div`
  height: 41px;
  flex: none;
  display: flex;
  align-items: center;
  background: #f2f2f2;
  border-bottom: 1px solid #cfcfcf;
  color: #333;
`;

const AddressBox = styled.div`
  width: 1365px;
  height: 32px;
  flex: none;
  margin-left: 16px;
  display: flex;
  align-items: center;
  padding: 0 13px 0 11px;
  background: #fff;
  border: 1px solid #cfcfcf;
`;

const Url = styled.span`
  margin-left: 6px;
  padding-left: 6px;
  border-left: 1px solid #b0b0b0;
  line-height: 24px;
  color: #222;
`;

const UrlDim = styled.span`
  color: #777;
`;

const AddressEnd = styled.div`
  margin-left: auto;
  display: flex;
  align-items: center;
  gap: 16px;
`;

const AzureHead = styled.div`
  height: 49px;
  flex: none;
  display: flex;
  align-items: center;
  padding-left: 13px;
  border-bottom: 1px solid #e6e6e6;
`;

const AzureBrand = styled.span`
  width: 223px;
  margin-left: 11px;
  flex: none;
  font-size: 16px;
  font-weight: 500;
  color: #0078d4;
`;

const AzureCrumbs = styled.div`
  display: flex;
  gap: 13px;
  font-size: 15px;
  color: #666;
`;

const AzureSearch = styled.div`
  margin-left: auto;
  width: 216px;
  height: 31px;
  display: flex;
  align-items: center;
  gap: 8px;
  padding-left: 8px;
  border: 1px solid #e6e6e6;
  border-radius: 2px;
  color: #777;
  font-size: 15px;
`;

const MirrorSearch = styled(Search)`
  transform: scaleX(-1);
`;

const HeadIcons = styled.div`
  display: flex;
  align-items: center;
  gap: 29px;
  margin-left: 28px;
  color: #666;
`;

const Avatar = styled.span`
  width: ${(p) => p.$s}px;
  height: ${(p) => p.$s}px;
  flex: none;
  display: inline-flex;
  align-items: center;
  justify-content: center;
  border-radius: 50%;
  background: #da3b01;
  color: #f7d9cc;
  font-size: ${(p) => Math.round(p.$s / 2.6)}px;
`;

const HeadAvatar = styled(Avatar)`
  margin: 0 15px 0 23px;
  color: #fff;
  font-size: 14px;
`;

const AzureBody = styled.div`
  flex: 1;
  min-height: 0;
  display: flex;
`;

const AzureSide = styled.div`
  width: 260px;
  flex: none;
  display: flex;
  flex-direction: column;
  background: #eaeaea;
  border-right: 1px solid #dcdcdc;
`;

const ProjectRow = styled.div`
  height: 48px;
  flex: none;
  margin: 0 10px;
  display: flex;
  align-items: center;
  gap: 11px;
  padding-left: 2px;
  font-size: 15px;
  font-weight: 700;
  border-bottom: 1px solid #d0d0d0;
`;

const ProjectBadge = styled.span`
  width: 24px;
  height: 24px;
  flex: none;
  display: flex;
  align-items: center;
  justify-content: center;
  border-radius: 3px;
  background: #da3b01;
  color: #ffd5c0;
  font-weight: 400;
  font-size: 14px;
`;

const PlusEnd = styled.span`
  margin-left: auto;
  margin-right: 2px;
  display: flex;
  color: #444;
`;

const NavEntry = styled.div`
  height: ${(p) => p.$h || 48}px;
  flex: none;
  display: flex;
  align-items: center;
  gap: 11px;
  padding-left: ${(p) => (p.$rail ? 9 : 12)}px;
  padding-top: ${(p) => p.$pt || 0}px;
  background: ${(p) => p.$bg || "transparent"};
  border-left: ${(p) => (p.$rail ? "3px solid #0078d4" : "none")};
  font-weight: ${(p) => (p.$strong ? 500 : 400)};
`;

const NavIcon = styled.span`
  width: 24px;
  height: 24px;
  flex: none;
  display: flex;
  align-items: center;
  justify-content: center;
  color: #333;
`;

const NavSpacer = styled.div`
  flex: 1;
`;

const NavFoot = styled.div`
  height: 49px;
  flex: none;
  margin: 0 10px;
  display: flex;
  align-items: center;
  gap: 11px;
  padding-left: 3px;
  border-top: 1px solid #d0d0d0;
`;

const WorkArea = styled.div`
  flex: 1;
  min-width: 0;
  display: flex;
  flex-direction: column;
`;

const WorkHead = styled.div`
  height: 102px;
  flex: none;
  padding-left: 10px;
  border-left: 10px solid #cc293d;
`;

const BugRow = styled.div`
  height: 28px;
  display: flex;
  align-items: center;
  gap: 5px;
  padding: 2px 0 0 4px;
  font-size: 13px;
  color: #555;
`;

const WorkTitle = styled.div`
  height: 34px;
  display: flex;
  align-items: center;
  gap: 14px;
  font-size: 20px;
  color: #222;
`;

const MetaRow = styled.div`
  height: 40px;
  display: flex;
  align-items: center;
`;

const AuthorBox = styled.div`
  width: 313px;
  padding-left: 3px;
  display: flex;
  align-items: center;
  gap: 4px;
`;

const Comments = styled.div`
  display: flex;
  align-items: center;
  gap: 8px;
  width: 114px;
`;

const TagChip = styled.span`
  width: ${(p) => p.$w}px;
  height: 20px;
  margin-right: 8px;
  display: flex;
  align-items: center;
  justify-content: center;
  gap: 9px;
  background: #eff6fc;
  color: #666;
  font-size: 13px;
`;

const WorkActions = styled.div`
  margin-left: auto;
  display: flex;
  align-items: center;
  height: 28px;
  padding-right: 18px;
`;

const ActionChip = styled.div`
  width: ${(p) => p.$w}px;
  height: 28px;
  margin-left: ${(p) => p.$ml || 0}px;
  display: flex;
  align-items: center;
  justify-content: center;
  gap: 8px;
  background: ${(p) => p.$bg || "transparent"};
  color: ${(p) => p.$c || "#222"};
  border-left: ${(p) => (p.$edge ? "1px solid #888" : "none")};
`;

const WorkBand = styled.div`
  height: 71px;
  flex: none;
  display: flex;
  justify-content: space-between;
  padding: 0 17px 0 22px;
  background: #f8f8f8;
  border-top: 1px solid #e8e8e8;
  border-bottom: 1px solid #e8e8e8;
`;

const BandGrid = styled.div`
  display: grid;
  grid-template-columns: 71px 181px 70px auto;
  grid-auto-rows: 24px;
  row-gap: 4px;
  align-items: center;
  padding-top: 10px;
`;

const BandLabel = styled.span`
  color: #777;
  font-size: 13px;
  text-decoration: ${(p) => (p.$u ? "underline" : "none")};
`;

const BandValue = styled.span`
  display: flex;
  align-items: center;
  gap: 7px;
  white-space: nowrap;
  color: ${(p) => (p.$dim ? "#888" : "#222")};
`;

const StateDot = styled.span`
  width: 10px;
  height: 10px;
  border-radius: 50%;
  background: #0078d4;
`;

const BandRight = styled.div`
  display: flex;
  flex-direction: column;
  align-items: flex-end;
  justify-content: space-between;
`;

const Updated = styled.span`
  margin-top: 13px;
  font-size: 13px;
  color: #777;
`;

const BandTabs = styled.div`
  display: flex;
  height: 34px;
  margin-bottom: -1px;
`;

const BandTab = styled.div`
  width: ${(p) => p.$w}px;
  display: flex;
  align-items: center;
  justify-content: center;
  font-size: 13px;
  color: ${(p) => (p.$active ? "#0078d4" : "#777")};
  background: ${(p) => (p.$active ? "#fff" : "transparent")};
  border: 1px solid #e8e8e8;
  border-left: ${(p) => (p.$active ? "1px solid #e8e8e8" : "none")};
  border-bottom: ${(p) => (p.$active ? "none" : "1px solid #e8e8e8")};
`;

const WorkColumns = styled.div`
  flex: 1;
  min-height: 0;
  display: flex;
  padding-left: 20px;
  overflow: hidden;
`;

const ColLeft = styled.div`
  width: 689px;
  flex: none;
`;

const ColMid = styled.div`
  width: 334px;
  flex: none;
  margin-left: 23px;
`;

const ColRight = styled.div`
  width: 333px;
  flex: none;
  margin-left: 24px;
`;

const WorkScroll = styled.div`
  width: 16px;
  margin-left: auto;
  flex: none;
  display: flex;
  flex-direction: column;
  justify-content: space-between;
  align-items: center;
  background: #b4b4b4;
  color: #777;
`;

const ScrollCap = styled.div`
  width: 100%;
  height: 24px;
  display: flex;
  align-items: center;
  justify-content: center;
  background: #f0f0f0;
`;

const Heading = styled.div`
  height: 40px;
  margin-top: ${(p) => p.$mt || 0}px;
  display: flex;
  align-items: center;
  justify-content: space-between;
  padding: 4px 0 0 1px;
  font-size: 16px;
  font-weight: 500;
  color: #222;
  border-bottom: 2px solid #e8e8e8;
`;

const HeadTools = styled.span`
  display: flex;
  align-items: center;
  gap: 12px;
  padding-right: 4px;
  color: #333;
`;

const Steps = styled.div`
  padding: 12px 0 0 5px;
  line-height: 19px;
  font-size: 14px;
`;

const Prompt = styled.div`
  height: 20px;
  margin-top: 10px;
  padding-left: 5px;
  font-style: italic;
  color: #888;
  font-size: 13.5px;
  line-height: 20px;
`;

const CommentRow = styled.div`
  margin-top: 5px;
  display: flex;
  gap: 6px;
`;

const CommentAvatar = styled(Avatar)`
  margin-top: 4px;
`;

const CommentBox = styled.div`
  flex: 1;
  height: 89px;
  padding: 7px 9px;
  border: 1px solid #e8e8e8;
  border-bottom-width: 2px;
  border-radius: 3px;
  font-style: italic;
  font-size: 13.5px;
  color: #888;
`;

const Field = styled.div`
  margin-top: 4px;
  min-height: 43px;
  padding-left: 1px;
`;

const FieldName = styled.div`
  height: 20px;
  line-height: 20px;
  font-size: 13px;
  color: #777;
`;

const FieldValue = styled.div`
  height: 23px;
  display: flex;
  align-items: center;
  gap: 4px;
`;

const ValueAvatar = styled(Avatar)`
  margin-left: 2px;
`;

const InfoCard = styled.div`
  margin-top: ${(p) => (p.$mt === undefined ? 6 : p.$mt)}px;
  display: flex;
  align-items: center;
  padding: 10px 0 10px 10px;
  background: #f4f4f4;
  font-size: 12px;
  line-height: 16px;
  white-space: nowrap;
`;

const CardIcon = styled.span`
  width: 40px;
  flex: none;
  display: flex;
`;

const CardLink = styled.span`
  color: #0078d4;
`;

const AddLink = styled.div`
  height: 26px;
  margin-top: 4px;
  display: flex;
  align-items: center;
  gap: 5px;
  padding-left: 3px;
  font-size: 13.5px;
`;

// ---- azure product icons
const OverviewIcon = () => (
  <svg width="24" height="30" viewBox="0 0 24 30"><path d="M0 9l9-1 5-5h10v27H0z" fill="#1a6fc4" /><path d="M9 13h6V8h5v17H9z" fill="#8fc6f0" /><path d="M0 15h9v10H0z" fill="#0f5aa8" /></svg>
);
const BoardsIcon = () => (
  <svg width="26" height="30" viewBox="0 0 26 30"><rect width="22" height="24" fill="#0e9a83" /><path d="M3 3h5v4H3zM10 3h5v4h-5zM3 10h5v4H3zM10 10h5v4h-5zM3 17h5v4H3z" fill="#74e0c8" /><circle cx="17.5" cy="21.5" r="7.5" fill="#2bc9a6" /><path d="M14 21.5l2.5 3 4.5-5.5" fill="none" stroke="#fff" strokeWidth="2" /></svg>
);
const ReposIcon = ({ s = 24 }) => (
  <svg width={s} height={s * 1.25} viewBox="0 0 24 30"><path d="M5 0h14l1 4H4z" fill="#b83200" /><path d="M2 4h20a2 2 0 012 2v22a2 2 0 01-2 2H2a2 2 0 01-2-2V6a2 2 0 012-2z" fill="#e8481a" /><g fill="none" stroke="#fff" strokeWidth="1.4"><circle cx="8" cy="8" r="2" /><circle cx="16" cy="8" r="2" /><circle cx="8" cy="23" r="2" /><path d="M8 10v11M16 10c0 6-8 4-8 10" /></g></svg>
);
const RocketIcon = ({ s = 24 }) => (
  <svg width={s} height={s * 1.25} viewBox="0 0 24 30"><path d="M24 0l-2 14-8 5-1 11-6-4 4-11-9-1 8-8z" fill="#2563d8" /><circle cx="17" cy="8" r="2.6" fill="#9cc2f8" /><path d="M0 22h4v4h4v4H0z" fill="#a9c6f6" /></svg>
);
const FlaskIcon = () => (
  <svg width="24" height="30" viewBox="0 0 24 30"><path d="M8 2h8v9l8 16-2 3H2l-2-3 8-16z" fill="#a987e0" /><path d="M6 0h12v3H6z" fill="#8b63cf" /><path d="M3 20h18l3 7-2 3H2l-2-3z" fill="#5a24a8" /><circle cx="12" cy="17" r="3.4" fill="#cdb8f0" /></svg>
);
const BoxesIcon = () => (
  <svg width="24" height="30" viewBox="0 0 24 30"><rect x="4" width="16" height="15" fill="#cc2e6e" /><rect y="15" width="12" height="15" fill="#b81f5e" /><rect x="12" y="15" width="12" height="15" fill="#f0679e" /><path d="M10 3h4v2h-4zM4 19h3v2H4zM16 19h3v2h-3z" fill="#7a1240" /></svg>
);
const AzureMark = ({ s = 24 }) => (
  <svg width={s} height={s} viewBox="0 0 18 18"><path d="M17 4v9.74l-4 3.28-6.2-2.26V17L3.29 12.41l10.23.8V4.44zm-3.41.49L7.85 1v2.29L2.58 4.84 1 6.87v4.61l2.26 1V6.57z" fill="#0078d4" /></svg>
);

const FIELDS_A = [["Priority", "2"], ["Severity", "3 - Medium"], ["Effort", ""], ["Activity", "Development"]];
const FIELDS_B = [["Start Date", "29/01/2020 17:12"], ["To Test Date", ""], ["Final Test", ""], ["Redo 1", ""], ["Redo 2", ""], ["Redo 3", ""], ["Verification", ""]];
const SUB_ITEMS = [["Boards", LayoutGrid], ["Backlogs", Rows3], ["Sprints", Timer], ["Queries", Funnel], ["History", Table2]];

function EdgeBrowser() {
  return (
    <EdgeWindow>
      <EdgeTabs>
        <WinButton $w={32}><Copy size={15} strokeWidth={1} /></WinButton>
        <WinButton $w={33}><ArrowLeft size={15} strokeWidth={1} /></WinButton>
        <EdgeTab $w={200}><Favicon $bg="#fff" $c="#b3142d">W</Favicon><TabCaption>(1) Locamail :: Caixa de entr</TabCaption></EdgeTab>
        <EdgeTab $w={200}><Favicon $bg="#00809d" $c="#fff" $fs={14}>b</Favicon><TabCaption>CAÇA AO INGLÊS NUM SHC</TabCaption></EdgeTab>
        <EdgeTab $w={203} $active><AzureMark s={16} /><TabCaption>Bug 2658: Ajustes em c</TabCaption><X size={15} strokeWidth={1} /></EdgeTab>
        <EdgeTab $w={201}><Favicon $bg="#4285f4" $c="#fff" $fs={10}>G</Favicon><TabCaption>Google Tradutor</TabCaption></EdgeTab>
        <EdgeTab $w={200}><Favicon><FaGithub size={16} /></Favicon><TabCaption>exceptions2-csharp/Prograr</TabCaption></EdgeTab>
        <EdgeTab $w={201}><Favicon $c="#ec5252" $it $fs={16}>u</Favicon><TabCaption>C# COMPLETO 2020 Progra</TabCaption></EdgeTab>
        <WinButton $w={34}><Plus size={17} strokeWidth={1} /></WinButton>
        <WinButton $w={32}><ChevronDown size={16} strokeWidth={1} color="#777" /></WinButton>
        <WinButton $w={243} />
        <WinButton $w={46}><Minus size={14} strokeWidth={1} /></WinButton>
        <WinButton $w={46}><Square size={12} strokeWidth={1.2} /></WinButton>
        <WinButton $w={46}><X size={16} strokeWidth={1} /></WinButton>
      </EdgeTabs>
      <EdgeBar>
        <WinButton $w={40}><ArrowLeft size={18} strokeWidth={1} color="#999" /></WinButton>
        <WinButton $w={40}><ArrowRight size={18} strokeWidth={1} color="#999" /></WinButton>
        <WinButton $w={40}><RotateCw size={16} strokeWidth={1.1} /></WinButton>
        <WinButton $w={40}><House size={16} strokeWidth={1.1} /></WinButton>
        <AddressBox>
          <Lock size={13} strokeWidth={1.1} color="#888" />
          <Url><UrlDim>https://</UrlDim>remotatec.visualstudio.com<UrlDim>/TXRoIP/_workitems/edit/2658</UrlDim></Url>
          <AddressEnd>
            <BookOpen size={16} strokeWidth={1} color="#aaa" />
            <Star size={16} strokeWidth={1.1} />
          </AddressEnd>
        </AddressBox>
        <WinButton $w={18} />
        <WinButton $w={39}><ListChecks size={16} strokeWidth={1.1} /></WinButton>
        <WinButton $w={39}><PenLine size={16} strokeWidth={1.1} /></WinButton>
        <WinButton $w={39}><Share size={15} strokeWidth={1.1} /></WinButton>
        <WinButton $w={42}><Ellipsis size={15} strokeWidth={1.2} /></WinButton>
      </EdgeBar>
      <AzureHead>
        <AzureMark s={24} />
        <AzureBrand>Azure DevOps</AzureBrand>
        <AzureCrumbs><span>remotatec</span><span>/</span><span>TXRoIP</span><span>/</span><span>Boards</span><span>/</span><span>Work items</span></AzureCrumbs>
        <AzureSearch><MirrorSearch size={16} strokeWidth={1.2} />Search</AzureSearch>
        <HeadIcons>
          <ListChecks size={19} strokeWidth={1.1} />
          <ShoppingBag size={19} strokeWidth={1.1} />
          <CircleHelp size={19} strokeWidth={1.1} />
          <UserCog size={19} strokeWidth={1.1} />
        </HeadIcons>
        <HeadAvatar $s={32}>JA</HeadAvatar>
      </AzureHead>
      <AzureBody>
        <AzureSide>
          <ProjectRow>
            <ProjectBadge>T</ProjectBadge>TXRoIP
            <PlusEnd><Plus size={20} strokeWidth={1.2} /></PlusEnd>
          </ProjectRow>
          <NavEntry $h={52} $pt={4}><NavIcon><OverviewIcon /></NavIcon>Overview</NavEntry>
          <NavEntry $bg="#d9d9d9" $strong><NavIcon><BoardsIcon /></NavIcon>Boards</NavEntry>
          <NavEntry $h={40} $bg="#cbcbcb" $rail $strong><NavIcon><ClipboardCheck size={20} strokeWidth={1.1} /></NavIcon>Work items</NavEntry>
          {SUB_ITEMS.map(([t, Icon]) => (
            <NavEntry key={t} $h={40} $bg="#d9d9d9"><NavIcon><Icon size={18} strokeWidth={1.2} /></NavIcon>{t}</NavEntry>
          ))}
          <NavEntry><NavIcon><ReposIcon /></NavIcon>Repos</NavEntry>
          <NavEntry><NavIcon><RocketIcon /></NavIcon>Pipelines</NavEntry>
          <NavEntry><NavIcon><FlaskIcon /></NavIcon>Test Plans</NavEntry>
          <NavEntry><NavIcon><BoxesIcon /></NavIcon>Artifacts</NavEntry>
          <NavSpacer />
          <NavFoot>
            <NavIcon><Settings size={17} strokeWidth={1.1} /></NavIcon>Project settings
            <PlusEnd><ChevronsLeft size={20} strokeWidth={1} /></PlusEnd>
          </NavFoot>
        </AzureSide>
        <WorkArea>
          <WorkHead>
            <BugRow><Favicon $c="#cc293d"><svg width="12" height="14" viewBox="0 0 12 14"><path d="M6 1a3 3 0 013 3v1h1v6a4 4 0 01-8 0V5h1V4a3 3 0 013-3z" fill="#cc293d" /><path d="M2 7h8M2 10h8M6 5v8" stroke="#fff" strokeWidth=".7" /></svg></Favicon>BUG 2658</BugRow>
            <WorkTitle><span>2658</span><span>Ajustes em campos de modal de serviços</span></WorkTitle>
            <MetaRow>
              <AuthorBox><Avatar $s={18}>JA</Avatar>Jucilaine Antunes</AuthorBox>
              <Comments><MessageSquare size={15} strokeWidth={1.1} color="#0078d4" />0 comments</Comments>
              <TagChip $w={53}>Web<X size={14} strokeWidth={1} /></TagChip>
              <TagChip $w={24}><Plus size={15} strokeWidth={1} color="#8aa" /></TagChip>
              <WorkActions>
                <ActionChip $w={63} $bg="#ebebeb" $c="#aaa"><Save size={15} strokeWidth={1.2} />Save</ActionChip>
                <ActionChip $w={95} $ml={5} $bg="#f0f0f0"><Eye size={14} strokeWidth={1.2} />Follow</ActionChip>
                <ActionChip $w={28} $bg="#f0f0f0" $edge><Settings size={15} strokeWidth={1.2} /></ActionChip>
                <ActionChip $w={33} $ml={1}><RotateCw size={16} strokeWidth={1.2} /></ActionChip>
                <ActionChip $w={33} $c="#aaa"><Undo2 size={16} strokeWidth={1.1} /></ActionChip>
                <ActionChip $w={33}><Ellipsis size={15} strokeWidth={3} /></ActionChip>
              </WorkActions>
            </MetaRow>
          </WorkHead>
          <WorkBand>
            <BandGrid>
              <BandLabel $u>State</BandLabel>
              <BandValue><StateDot />In Progress</BandValue>
              <BandLabel $u>Area</BandLabel>
              <BandValue>TXRoIP\Development</BandValue>
              <BandLabel>Reason</BandLabel>
              <BandValue $dim><Lock size={13} strokeWidth={1.1} />Moved out of state To ...</BandValue>
              <BandLabel $u>Iteration</BandLabel>
              <BandValue>TXRoIP\Version 2.5\Sprint 30 [2.5]</BandValue>
            </BandGrid>
            <BandRight>
              <Updated>Updated by Jucilaine Antunes: 11m ago</Updated>
              <BandTabs>
                <BandTab $w={57} $active>Details</BandTab>
                <BandTab $w={47}><History size={15} strokeWidth={1.2} /></BandTab>
                <BandTab $w={47}><Link2 size={15} strokeWidth={1.2} /></BandTab>
                <BandTab $w={47}><Paperclip size={15} strokeWidth={1.2} /></BandTab>
              </BandTabs>
            </BandRight>
          </WorkBand>
          <WorkColumns>
            <ColLeft>
              <Heading>Repro Steps</Heading>
              <Steps>
                1) Campo Senha em de Mensageria não está como input type "password".<br /><br />
                2) Na guia SNMP, os dois campos "Versão" e os dois campos "Algoritmo" não estão salvando ou carregando<br />
                corretamente.<br />
                Após salvar com alguma informação, ao alterá-lo novamente os campos permanecem em branco.
              </Steps>
              <Heading $mt={12}>
                System Info
                <HeadTools><Maximize2 size={14} strokeWidth={1.2} /><ChevronDown size={11} /></HeadTools>
              </Heading>
              <Heading $mt={6}>Acceptance Criteria</Heading>
              <Prompt>Click to add Acceptance Criteria</Prompt>
              <Heading $mt={32}>Discussion</Heading>
              <CommentRow>
                <CommentAvatar $s={28}>JA</CommentAvatar>
                <CommentBox>Add a comment. Use # to link a work item, ! to link a pull request, or @ to mention a person.</CommentBox>
              </CommentRow>
            </ColLeft>
            <ColMid>
              <Heading>Details</Heading>
              <Field>
                <FieldName>Accepted By</FieldName>
                <FieldValue><ValueAvatar $s={18}>JA</ValueAvatar>Jucilaine Antunes</FieldValue>
              </Field>
              {FIELDS_A.map(([k, v]) => (
                <Field key={k}><FieldName>{k}</FieldName><FieldValue>{v}</FieldValue></Field>
              ))}
              <Heading $mt={5}>Build</Heading>
              {FIELDS_B.map(([k, v]) => (
                <Field key={k}><FieldName>{k}</FieldName><FieldValue>{v}</FieldValue></Field>
              ))}
            </ColMid>
            <ColRight>
              <Heading>Deployment</Heading>
              <InfoCard>
                <CardIcon><RocketIcon s={30} /></CardIcon>
                <div>
                  To track releases associated with this work item, go<br />
                  to <CardLink>Releases</CardLink> and turn on deployment status<br />
                  reporting for Boards in your pipeline's Options<br />
                  menu. <CardLink>Learn more</CardLink>
                </div>
              </InfoCard>
              <Heading $mt={5}>Development</Heading>
              <AddLink><Plus size={14} color="#107c10" strokeWidth={2} />Add link</AddLink>
              <InfoCard $mt={0}>
                <CardIcon><ReposIcon s={28} /></CardIcon>
                <div>
                  Link an Azure Repos <CardLink>commit</CardLink>, <CardLink>pull request</CardLink> or<br />
                  <CardLink>branch</CardLink> to see the status of your development. You<br />
                  can also <CardLink>create a branch</CardLink> to get started.
                </div>
              </InfoCard>
              <Heading $mt={5}>Related Work</Heading>
              <AddLink><Plus size={14} color="#107c10" strokeWidth={2} />Add link<ChevronDown size={10} /></AddLink>
            </ColRight>
            <WorkScroll>
              <ScrollCap><ChevronUp size={12} /></ScrollCap>
              <ScrollCap><ChevronDown size={12} /></ScrollCap>
            </WorkScroll>
          </WorkColumns>
        </WorkArea>
      </AzureBody>
    </EdgeWindow>
  );
}

function RightMonitor() {
  return (
    <RightScreen>
      <VisualStudio />
      <Bar $bg="#20261f">
        <Slot $w={48}><svg width="30" height="30" viewBox="0 0 30 30">{TASK_ICONS.win}</svg></Slot>
        <SearchBox $w={344}><WinSearch />Digite aqui para pesquisar</SearchBox>
        <Slots items={RIGHT_BAR} />
        <SystemTray time="17:24" date="29/01/2020" count="4" bg="#20261f" />
      </Bar>
      <EdgeBrowser />
    </RightScreen>
  );
}

export default function App() {
  return (
    <Desktop>
      <GlobalStyle />
      <LeftMonitor />
      <RightMonitor />
    </Desktop>
  );
}
